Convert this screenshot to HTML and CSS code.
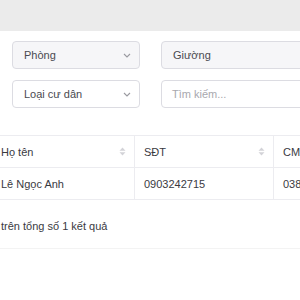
FILE: index.html
```html
<!DOCTYPE html>
<html>
<head>
<meta charset="utf-8">
<link rel="stylesheet" href="styles.css">
</head>
<body>
<div class="topbar"></div>
<div class="filters">
  <div class="select filled"><span>Phòng</span><svg class="chev" width="8" height="5" viewBox="0 0 8 5"><path d="M1 1l3 3 3-3" fill="none" stroke="#9a9aa0" stroke-width="1.1"/></svg></div>
  <div class="select filled"><span>Giường</span><svg class="chev" width="8" height="5" viewBox="0 0 8 5"><path d="M1 1l3 3 3-3" fill="none" stroke="#9a9aa0" stroke-width="1.1"/></svg></div>
  <div class="select"><span>Loại cư dân</span><svg class="chev" width="8" height="5" viewBox="0 0 8 5"><path d="M1 1l3 3 3-3" fill="none" stroke="#9a9aa0" stroke-width="1.1"/></svg></div>
  <div class="select search"><span class="ph">Tìm kiếm...</span></div>
</div>
<div class="tablewrap">
  <div class="tbl">
    <div class="cell head"><span>Họ tên</span><svg class="sort" width="7" height="9" viewBox="0 0 7 9"><path d="M3.5 0.5L6.5 3.7H0.5Z M3.5 8.5L6.5 5.3H0.5Z" fill="#d3d3d8"/></svg></div>
    <div class="cell head sep"><span>SĐT</span><svg class="sort" width="7" height="9" viewBox="0 0 7 9"><path d="M3.5 0.5L6.5 3.7H0.5Z M3.5 8.5L6.5 5.3H0.5Z" fill="#d3d3d8"/></svg></div>
    <div class="cell head sep"><span>CMND</span></div>
    <div class="cell"><span>Lê Ngọc Anh</span></div>
    <div class="cell sep"><span>0903242715</span></div>
    <div class="cell sep"><span>038123456789</span></div>
  </div>
</div>
<div class="footer">trên tổng số 1 kết quả</div>
<div class="divider"></div>
</body>
</html>
```
FILE: styles.css
```css
html, body {
  margin: 0;
  padding: 0;
  width: 300px;
  height: 300px;
  overflow: hidden;
  background: #ffffff;
  font-family: "Liberation Sans", Arial, sans-serif;
  font-size: 11px;
  color: #3a3a3f;
}
.topbar {
  height: 31px;
  background: #ebebeb;
}
.filters {
  display: grid;
  grid-template-columns: 128px 170px;
  column-gap: 21px;
  row-gap: 11px;
  padding: 10px 0 0 12px;
  width: max-content;
}
.select {
  box-sizing: border-box;
  height: 28px;
  border: 1px solid #dcdce2;
  border-radius: 4px;
  background: #ffffff;
  display: flex;
  align-items: center;
  justify-content: space-between;
  padding: 0 8px 0 11px;
  color: #4a4a50;
}
.select.filled {
  background: #f6f6f8;
}
.select.search {
  padding-left: 10px;
}
.ph {
  color: #a8a8ae;
}
.chev {
  display: block;
}
.tablewrap {
  margin: 27px 0 0 -8px;
  width: 360px;
}
.tbl {
  display: grid;
  grid-template-columns: 142px 139px 79px;
  border-top: 1px solid #ececf0;
}
.cell {
  box-sizing: border-box;
  height: 32px;
  padding: 0 8px 0 9px;
  border-bottom: 1px solid #ececf0;
  display: flex;
  align-items: center;
  justify-content: space-between;
  white-space: nowrap;
  overflow: hidden;
  color: #3a3a3f;
}
.cell.sep {
  border-left: 1px solid #ececf0;
}
.sort {
  display: block;
  flex: none;
}
.footer {
  margin-top: 19px;
  padding-left: 1px;
  color: #3a3a3f;
  line-height: 14px;
}
.divider {
  margin-top: 15px;
  height: 1px;
  background: #f3f3f3;
}
```
